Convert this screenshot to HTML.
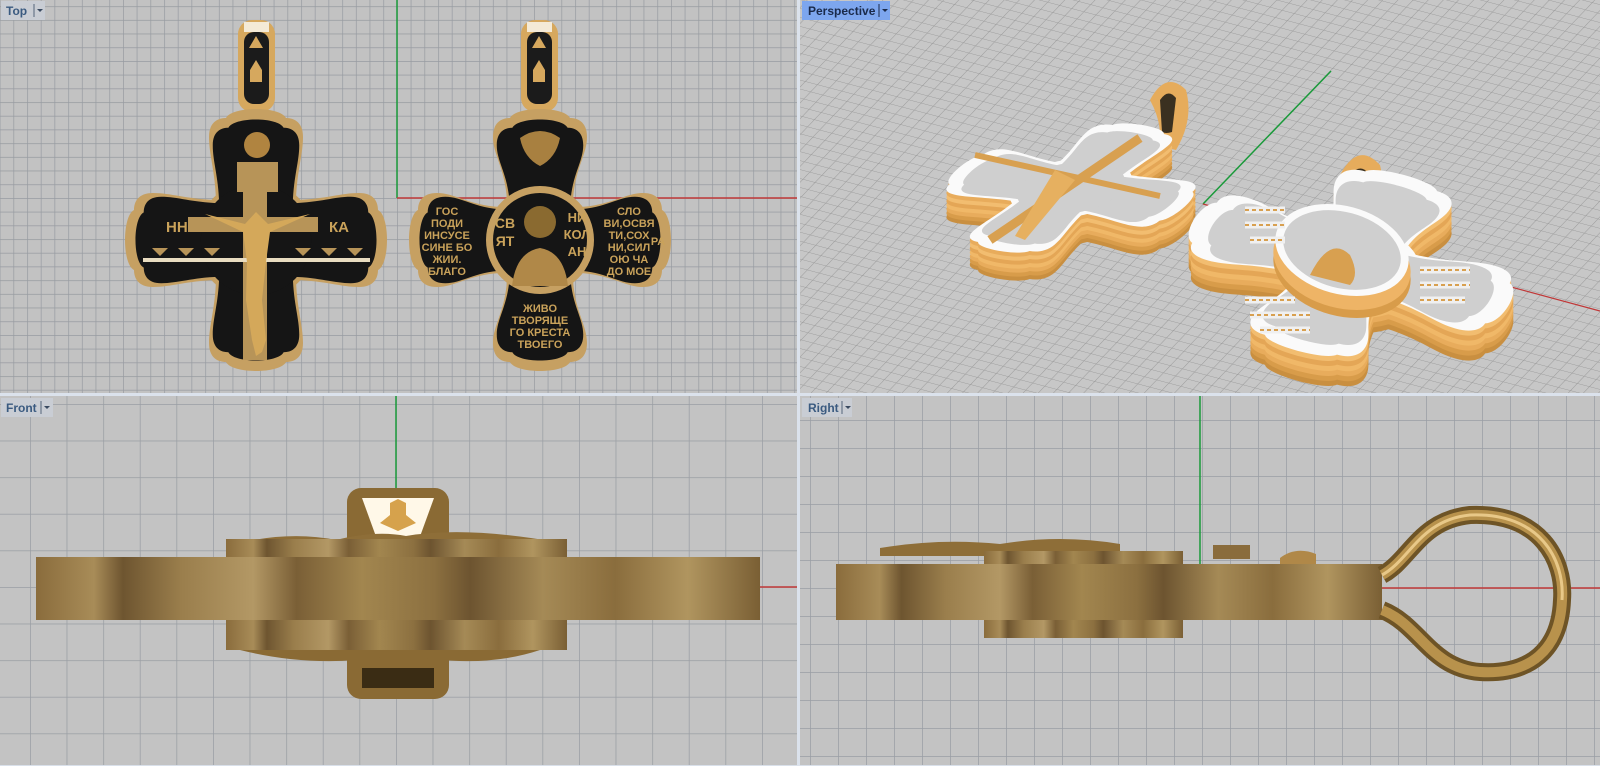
<!DOCTYPE html>
<html><head><meta charset="utf-8"><style>
html,body{margin:0;padding:0;background:#fff;width:1600px;height:772px;overflow:hidden}
svg{display:block}
.lbl{font-family:"Liberation Sans","DejaVu Sans",sans-serif;font-size:12px;font-weight:bold}
.ct{font-family:"Liberation Sans","DejaVu Sans",sans-serif;font-weight:bold;fill:#c9a25a}
</style></head><body>
<svg width="1600" height="772" viewBox="0 0 1600 772" xmlns="http://www.w3.org/2000/svg">
<defs>
 <pattern id="gTop" x="397" y="198" width="13.7" height="13.7" patternUnits="userSpaceOnUse">
  <rect width="13.7" height="13.7" fill="#c2c2c2"/>
  <path d="M0 0H13.7M0 0V13.7" stroke="#979ba1" stroke-width="1.4"/>
 </pattern>
 <pattern id="gFront" x="396" y="587" width="36.6" height="36.6" patternUnits="userSpaceOnUse">
  <rect width="36.6" height="36.6" fill="#c3c3c3"/>
  <path d="M0 0H36.6M0 0V36.6" stroke="#9a9ea4" stroke-width="1.5"/>
 </pattern>
 <pattern id="gRight" x="1202" y="588" width="28" height="28" patternUnits="userSpaceOnUse">
  <rect width="28" height="28" fill="#c3c3c3"/>
  <path d="M0 0H28M0 0V28" stroke="#9a9ea4" stroke-width="1.5"/>
 </pattern>
 <pattern id="gPersp" width="11" height="11" patternUnits="userSpaceOnUse" patternTransform="matrix(1.1,0.29,-0.62,0.65,1203,204)">
  <rect width="11" height="11" fill="#c7c7c7"/>
  <path d="M0 0H11M0 0V11" stroke="#9a9a9a" stroke-width="1"/>
 </pattern>
 <path id="arm" d="M -40,-40 C -41,-70 -47,-85 -47,-103 C -47,-118 -38,-122 -30,-122 C -24,-134 24,-134 30,-122 C 38,-122 47,-118 47,-103 C 47,-85 41,-70 40,-40 Z"/>
 <g id="cross">
  <use href="#arm"/><use href="#arm" transform="rotate(90)"/><use href="#arm" transform="rotate(180)"/><use href="#arm" transform="rotate(270)"/>
  <circle r="60"/>
 </g>
 <path id="arm2" d="M -33,-40 C -35,-72 -47,-85 -47,-103 C -47,-118 -38,-122 -30,-122 C -24,-134 24,-134 30,-122 C 38,-122 47,-118 47,-103 C 47,-85 35,-72 33,-40 Z"/>
 <g id="cross2">
  <use href="#arm2"/><use href="#arm2" transform="rotate(90)"/><use href="#arm2" transform="rotate(180)"/><use href="#arm2" transform="rotate(270)"/>
  <circle r="54"/>
 </g>
 <linearGradient id="br" x1="0" y1="0" x2="1" y2="0">
  <stop offset="0" stop-color="#8a6c3c"/><stop offset="0.08" stop-color="#a88c58"/><stop offset="0.12" stop-color="#6e5530"/>
  <stop offset="0.2" stop-color="#9a7e4c"/><stop offset="0.3" stop-color="#b39865"/><stop offset="0.36" stop-color="#7a5f36"/>
  <stop offset="0.45" stop-color="#a2864f"/><stop offset="0.55" stop-color="#8c7040"/><stop offset="0.6" stop-color="#6d5430"/>
  <stop offset="0.7" stop-color="#a58a56"/><stop offset="0.8" stop-color="#8a6d3d"/><stop offset="0.9" stop-color="#b0955f"/><stop offset="1" stop-color="#7a5f34"/>
 </linearGradient>
 <clipPath id="cTL"><rect x="0" y="0" width="797" height="393"/></clipPath>
 <clipPath id="cTR"><rect x="800" y="0" width="800" height="393"/></clipPath>
 <clipPath id="cBL"><rect x="0" y="396" width="797" height="369"/></clipPath>
 <clipPath id="cBR"><rect x="800" y="396" width="800" height="369"/></clipPath>
</defs>
<rect width="1600" height="772" fill="#fff"/>
<rect width="1600" height="766" fill="#d9e0ea"/>

<!-- TOP -->
<g clip-path="url(#cTL)">
 <rect x="0" y="0" width="797" height="393" fill="url(#gTop)"/>
 <line x1="397" y1="0" x2="397" y2="198" stroke="#1a9a3a" stroke-width="1.5"/>
 <line x1="397" y1="198" x2="797" y2="198" stroke="#c03838" stroke-width="1.5"/>
 <rect x="238" y="20" width="37" height="92" rx="14" fill="#d6a85e"/>
 <rect x="244" y="32" width="25" height="72" rx="10" fill="#1b1b1b"/>
 <path d="M256 36 l-7 12 h14 z M256 60 l-6 10 v12 h12 v-12 z" fill="#d6a85e"/>
 <rect x="244" y="22" width="25" height="10" fill="#f4ead6"/>
 <use href="#cross" fill="#c6a062" transform="translate(256,240)"/>
 <use href="#cross" fill="#151515" transform="translate(256,240) scale(0.92)"/>
 <circle cx="257" cy="145" r="13" fill="#b08440"/>
 <rect x="237" y="162" width="41" height="30" fill="#b79458"/>
 <rect x="243" y="162" width="24" height="198" fill="#b79458"/>
 <rect x="188" y="217" width="130" height="15" fill="#b79458"/>
 <rect x="143" y="258" width="227" height="4" fill="#e8dcc0"/>
 <path d="M152 248h16l-8 8z M178 248h16l-8 8z M204 248h16l-8 8z M295 248h16l-8 8z M321 248h16l-8 8z M347 248h16l-8 8z" fill="#b79458"/>
 <text class="ct" x="166" y="232" font-size="15" fill="#b79458">НН</text>
 <text class="ct" x="329" y="232" font-size="15" fill="#b79458">КА</text>
 <path d="M205 214 L245 224 L256 212 L268 224 L310 214 L270 232 L266 262 L262 300 L266 340 L262 352 L256 356 L252 340 L246 300 L247 262 L243 232 Z" fill="#d4a85a"/>
 <rect x="521" y="20" width="37" height="92" rx="14" fill="#d6a85e"/>
 <rect x="527" y="32" width="25" height="72" rx="10" fill="#1b1b1b"/>
 <rect x="527" y="22" width="25" height="10" fill="#f4ead6"/>
 <path d="M539 36 l-7 12 h14 z M539 60 l-6 10 v12 h12 v-12 z" fill="#d6a85e"/>
 <use href="#cross2" fill="#c6a062" transform="translate(540,240)"/>
 <use href="#cross2" fill="#151515" transform="translate(540,240) scale(0.92)"/>
 <circle cx="540" cy="240" r="54" fill="#c6a062"/>
 <circle cx="540" cy="240" r="47" fill="#151515"/>
 <path d="M520 138 q20 -14 40 0 q-4 20 -20 28 q-16 -8 -20 -28z" fill="#a88040"/>
 <circle cx="540" cy="222" r="16" fill="#8a6a30"/>
 <path d="M512 286 q4 -34 28 -38 q24 4 28 38z" fill="#b08848"/>
 <g class="ct" font-size="11" text-anchor="middle" fill="#c9a25a">
  <text x="447" y="215">ГОС</text><text x="447" y="227">ПОДИ</text><text x="447" y="239">ИНСУСЕ</text><text x="447" y="251">СИНЕ БО</text><text x="447" y="263">ЖИИ.</text><text x="447" y="275">БЛАГО</text>
  <text x="629" y="215">СЛО</text><text x="629" y="227">ВИ,ОСВЯ</text><text x="629" y="239">ТИ,СОХ</text><text x="629" y="251">НИ,СИЛ</text><text x="629" y="263">ОЮ ЧА</text><text x="629" y="275">ДО МОЕ</text>
  <text x="658" y="245">РА</text>
  <text x="540" y="312">ЖИВО</text><text x="540" y="324">ТВОРЯЩЕ</text><text x="540" y="336">ГО КРЕСТА</text><text x="540" y="348">ТВОЕГО</text>
  <text x="505" y="228" font-size="14">СВ</text><text x="505" y="246" font-size="14">ЯТ</text>
  <text x="577" y="222" font-size="13">НИ</text><text x="577" y="239" font-size="13">КОЛ</text><text x="577" y="256" font-size="13">АН</text>
 </g>
</g>

<!-- PERSPECTIVE -->
<g clip-path="url(#cTR)">
 <rect x="800" y="0" width="800" height="393" fill="url(#gPersp)"/>
 <line x1="1203" y1="204" x2="1331" y2="71" stroke="#1a9a3a" stroke-width="1.5"/>
 <line x1="1203" y1="204" x2="1600" y2="311" stroke="#c03838" stroke-width="1.2"/>
 <path d="M1150 100 q16 -30 36 -10 q8 30 -10 60 l-18 -4 q6 -20 -8 -46z" fill="#e6ac5c"/>
 <path d="M1160 100 q8 -12 16 -2 l-4 34 q-6 2 -10 0z" fill="#3a3020"/>
 <g>
  <use href="#cross" fill="#c98f40" transform="matrix(0.86,0.15,-0.55,0.48,1071,216)"/>
  <use href="#cross" fill="#d89c4a" transform="matrix(0.86,0.15,-0.55,0.48,1071,212)"/>
  <use href="#cross" fill="#e8ac5c" transform="matrix(0.86,0.15,-0.55,0.48,1071,208)"/>
  <use href="#cross" fill="#f0b868" transform="matrix(0.86,0.15,-0.55,0.48,1071,204)"/>
  <use href="#cross" fill="#e4a656" transform="matrix(0.86,0.15,-0.55,0.48,1071,200)"/>
  <use href="#cross" fill="#f2bd70" transform="matrix(0.86,0.15,-0.55,0.48,1071,196)"/>
  <use href="#cross" fill="#e8ac5c" transform="matrix(0.86,0.15,-0.55,0.48,1071,192)"/>
 </g>
 <use href="#cross" fill="#fafafa" transform="matrix(0.86,0.15,-0.55,0.48,1071,188)"/>
 <use href="#cross" fill="#cfcfcf" transform="matrix(0.86,0.15,-0.55,0.48,1071,188) scale(0.88)"/>
 <path d="M990 240 L1140 138" stroke="#d8a050" stroke-width="9"/>
 <path d="M975 155 L1160 196" stroke="#d8a050" stroke-width="6"/>
 <path d="M1055 170 l20 10 l-50 60 l-10 -4z" fill="#e6b060"/>
 <path d="M1340 175 q18 -34 40 -10 q8 30 -10 60 l-20 -4 q6 -20 -10 -46z" fill="#e6ac5c"/>
 <path d="M1350 175 q10 -12 18 -2 l-4 34 q-6 2 -12 0z" fill="#3a3020"/>
 <g>
  <use href="#cross2" fill="#c98f40" transform="matrix(1.2,0.33,-0.41,0.67,1351,293)"/>
  <use href="#cross2" fill="#d89c4a" transform="matrix(1.2,0.33,-0.41,0.67,1351,288)"/>
  <use href="#cross2" fill="#e8ac5c" transform="matrix(1.2,0.33,-0.41,0.67,1351,283)"/>
  <use href="#cross2" fill="#f0b868" transform="matrix(1.2,0.33,-0.41,0.67,1351,278)"/>
  <use href="#cross2" fill="#e4a656" transform="matrix(1.2,0.33,-0.41,0.67,1351,273)"/>
  <use href="#cross2" fill="#f2bd70" transform="matrix(1.2,0.33,-0.41,0.67,1351,268)"/>
 </g>
 <use href="#cross2" fill="#fafafa" transform="matrix(1.2,0.33,-0.41,0.67,1351,263)"/>
 <use href="#cross2" fill="#cfcfcf" transform="matrix(1.2,0.33,-0.41,0.67,1351,263) scale(0.88)"/>
 <ellipse cx="1342" cy="270" rx="70" ry="46" transform="rotate(15 1342 270)" fill="#d89c4a"/>
 <ellipse cx="1342" cy="262" rx="70" ry="46" transform="rotate(15 1342 262)" fill="#eeb466"/>
 <ellipse cx="1342" cy="250" rx="68" ry="44" transform="rotate(15 1342 250)" fill="#fafafa"/>
 <ellipse cx="1342" cy="250" rx="60" ry="38" transform="rotate(15 1342 250)" fill="#cfcfcf"/>
 <path d="M1310 275 q20 -40 40 -20 q10 20 0 30z" fill="#d8a050"/>
 <path d="M1245 210 h40 M1245 225 h40 M1250 240 h35 M1245 300 h50 M1250 315 h60 M1260 330 h50 M1420 270 h50 M1420 285 h50 M1420 300 h45" stroke="#f0f0f0" stroke-width="7"/>
 <path d="M1245 210 h40 M1245 225 h40 M1250 240 h35 M1245 300 h50 M1250 315 h60 M1260 330 h50 M1420 270 h50 M1420 285 h50 M1420 300 h45" stroke="#d8a050" stroke-width="2" stroke-dasharray="4 3"/>
</g>

<!-- FRONT -->
<g clip-path="url(#cBL)">
 <rect x="0" y="396" width="797" height="369" fill="url(#gFront)"/>
 <line x1="396" y1="396" x2="396" y2="587" stroke="#1a9a3a" stroke-width="1.5"/>
 <line x1="396" y1="587" x2="797" y2="587" stroke="#c03838" stroke-width="1.5"/>
 <rect x="347" y="488" width="102" height="211" rx="14" fill="#8a6a34"/>
 <path d="M362 498 h72 l-16 44 h-40z" fill="#fff8e8"/>
 <path d="M390 503 l8 -4 l8 4 v12 l10 8 l-18 8 l-18 -8 l10 -8z" fill="#d6a24c"/>
 <path d="M362 668 h72 v20 h-72z" fill="#3a2c14"/>
 <path d="M226 546 q60 -16 110 -6 q40 -10 70 -4 q60 -10 150 6 v20 h-330z" fill="#8e6e38"/>
 <rect x="226" y="539" width="341" height="111" fill="url(#br)"/>
 <rect x="36" y="557" width="724" height="63" fill="url(#br)"/>
 <path d="M240 650 q80 20 160 4 q80 16 140 -4z" fill="#8a6a34"/>
</g>

<!-- RIGHT -->
<g clip-path="url(#cBR)">
 <rect x="800" y="396" width="800" height="369" fill="url(#gRight)"/>
 <line x1="1200" y1="396" x2="1200" y2="588" stroke="#1a9a3a" stroke-width="1.5"/>
 <line x1="1200" y1="588" x2="1600" y2="588" stroke="#c03838" stroke-width="1.5"/>
 <path d="M880 548 q60 -10 120 -4 q60 -10 120 0 v12 h-240z" fill="#8e6e38"/>
 <rect x="984" y="551" width="199" height="87" fill="url(#br)"/>
 <rect x="1213" y="545" width="37" height="14" fill="#8a6c3c"/>
 <path d="M1280 558 q16 -12 36 -4 v12 h-36z" fill="#b08848"/>
 <rect x="836" y="564" width="546" height="56" fill="url(#br)"/>
 <path d="M1382 575 C1410 560 1420 520 1470 515 C1540 512 1565 560 1562 600 C1560 650 1530 675 1480 672 C1430 668 1420 625 1382 610" fill="none" stroke="#6e5426" stroke-width="18"/>
 <path d="M1382 575 C1410 560 1420 520 1470 515 C1540 512 1565 560 1562 600 C1560 650 1530 675 1480 672 C1430 668 1420 625 1382 610" fill="none" stroke="#b8924c" stroke-width="10"/>
 <path d="M1382 575 C1410 560 1420 520 1470 515 C1540 512 1565 560 1562 600" fill="none" stroke="#e8c888" stroke-width="3"/>
</g>

<rect x="797" y="0" width="3" height="766" fill="#dbe2ec"/>
<rect x="0" y="393" width="1600" height="3" fill="#dbe2ec"/>

<g class="lbl">
 <rect x="1" y="1" width="44" height="19" fill="#c9cdd4"/><text x="6" y="15" fill="#3a5a80">Top</text>
 <path d="M34 4v13" stroke="#55657a"/><path d="M37 9h6l-3 3z" fill="#3a4a60"/>
 <rect x="802" y="1" width="88" height="19" fill="#7da6ee"/><text x="808" y="15" fill="#1a2a4a">Perspective</text>
 <path d="M879 4v13" stroke="#1a2a4a"/><path d="M882 9h6l-3 3z" fill="#1a2a4a"/>
 <rect x="1" y="398" width="52" height="19" fill="#c9cdd4"/><text x="6" y="412" fill="#3a5a80">Front</text>
 <path d="M41 401v13" stroke="#55657a"/><path d="M44 406h6l-3 3z" fill="#3a4a60"/>
 <rect x="802" y="398" width="50" height="19" fill="#c9cdd4"/><text x="808" y="412" fill="#3a5a80">Right</text>
 <path d="M842 401v13" stroke="#55657a"/><path d="M845 406h6l-3 3z" fill="#3a4a60"/>
</g>
</svg>
</body></html>
